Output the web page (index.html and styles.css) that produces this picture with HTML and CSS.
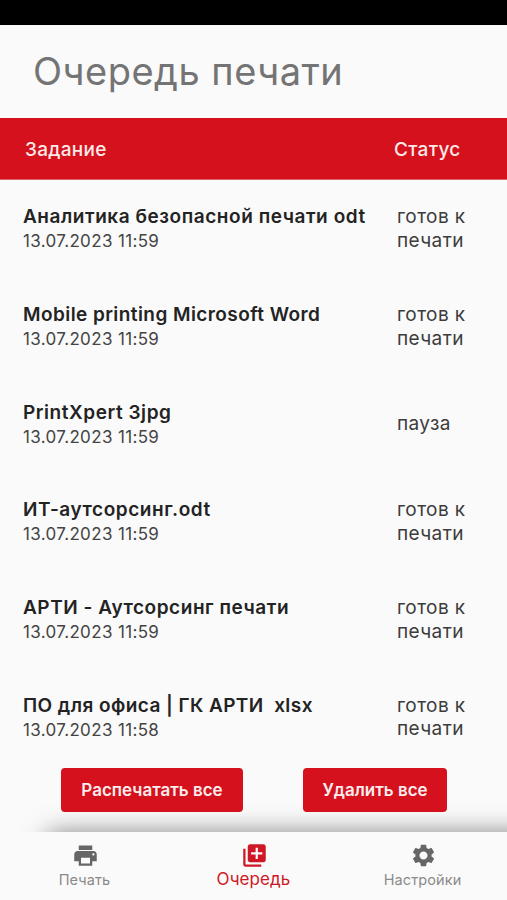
FILE: index.html
```
<!DOCTYPE html>
<html lang="ru">
<head>
    <meta charset="UTF-8">
    <meta name="viewport" content="width=device-width, initial-scale=1.0">
    <title>Очередь печати</title>
    <link rel="stylesheet" href="styles.css">
</head>
<body>
    <div class="status-bar"></div>
    <header class="page-header">
        <h1>Очередь печати</h1>
    </header>
    <div class="table-head">
        <span class="col-job">Задание</span>
        <span class="col-status">Статус</span>
    </div>

    <main class="queue">
        <div class="job">
            <div class="job-info">
                <div class="job-name">Аналитика безопасной печати odt</div>
                <div class="job-date">13.07.2023 11:59</div>
            </div>
            <div class="job-status">готов к печати</div>
        </div>
        <div class="job">
            <div class="job-info">
                <div class="job-name tight">Mobile printing Microsoft Word</div>
                <div class="job-date">13.07.2023 11:59</div>
            </div>
            <div class="job-status">готов к печати</div>
        </div>
        <div class="job">
            <div class="job-info">
                <div class="job-name">PrintXpert 3jpg</div>
                <div class="job-date">13.07.2023 11:59</div>
            </div>
            <div class="job-status">пауза</div>
        </div>
        <div class="job">
            <div class="job-info">
                <div class="job-name">ИТ-аутсорсинг.odt</div>
                <div class="job-date">13.07.2023 11:59</div>
            </div>
            <div class="job-status">готов к печати</div>
        </div>
        <div class="job">
            <div class="job-info">
                <div class="job-name">АРТИ - Аутсорсинг печати</div>
                <div class="job-date">13.07.2023 11:59</div>
            </div>
            <div class="job-status">готов к печати</div>
        </div>
        <div class="job">
            <div class="job-info">
                <div class="job-name tight">ПО для офиса | ГК АРТИ&nbsp; xlsx</div>
                <div class="job-date">13.07.2023 11:58</div>
            </div>
            <div class="job-status">готов к печати</div>
        </div>
    </main>

    <div class="actions">
        <button class="btn btn-print">Распечатать все</button>
        <button class="btn btn-delete">Удалить все</button>
    </div>

    <nav class="tab-bar">
        <a class="tab">
            <svg class="icon" viewBox="0 0 24 24"><path d="M19 8H5c-1.66 0-3 1.34-3 3v6h4v4h12v-4h4v-6c0-1.66-1.34-3-3-3zm-3 11H8v-5h8v5zm3-7c-.55 0-1-.45-1-1s.45-1 1-1 1 .45 1 1-.45 1-1 1zm-1-9H6v4h12V3z"/></svg>
            <span>Печать</span>
        </a>
        <a class="tab active">
            <svg class="icon" viewBox="0 0 24 24"><path d="M4 6H2v14c0 1.1.9 2 2 2h14v-2H4V6zm16-4H8c-1.1 0-2 .9-2 2v12c0 1.1.9 2 2 2h12c1.1 0 2-.9 2-2V4c0-1.1-.9-2-2-2zm-1 9h-4v4h-2v-4H9V9h4V5h2v4h4v2z"/></svg>
            <span>Очередь</span>
        </a>
        <a class="tab">
            <svg class="icon" viewBox="0 0 24 24"><path d="M19.14 12.94c.04-.3.06-.61.06-.94 0-.32-.02-.64-.07-.94l2.03-1.58c.18-.14.23-.41.12-.61l-1.92-3.32c-.12-.22-.37-.29-.59-.22l-2.39.96c-.5-.38-1.03-.7-1.62-.94l-.36-2.54c-.04-.24-.24-.41-.48-.41h-3.84c-.24 0-.43.17-.47.41l-.36 2.54c-.59.24-1.13.57-1.62.94l-2.39-.96c-.22-.08-.47 0-.59.22L2.74 8.87c-.12.21-.08.47.12.61l2.03 1.58c-.05.3-.09.63-.09.94s.02.64.07.94l-2.03 1.58c-.18.14-.23.41-.12.61l1.92 3.32c.12.22.37.29.59.22l2.39-.96c.5.38 1.03.7 1.62.94l.36 2.54c.05.24.24.41.48.41h3.84c.24 0 .44-.17.47-.41l.36-2.54c.59-.24 1.13-.56 1.62-.94l2.39.96c.22.08.47 0 .59-.22l1.92-3.32c.12-.22.07-.47-.12-.61l-2.01-1.58zM12 15.6c-1.98 0-3.6-1.62-3.6-3.6s1.62-3.6 3.6-3.6 3.6 1.62 3.6 3.6-1.62 3.6-3.6 3.6z"/></svg>
            <span>Настройки</span>
        </a>
    </nav>
</body>
</html>
```
FILE: styles.css
```
* {
    box-sizing: border-box;
}

body {
    margin: 0;
    height: 900px;
    display: flex;
    flex-direction: column;
    overflow: hidden;
    background: #fafafa;
    color: #232323;
    font-family: Inter, "Liberation Sans", sans-serif;
}

.status-bar {
    height: 25px;
    background: #000;
}

.page-header {
    height: 93px;
    padding-left: 33px;
}

.page-header h1 {
    margin: 0;
    font-size: 38px;
    font-weight: 400;
    line-height: 93px;
    letter-spacing: 0.5px;
    color: #747474;
}

.table-head {
    display: flex;
    align-items: center;
    height: 62px;
    padding: 1px 0 0 25px;
    background: #d4111c;
    border-bottom: 1px solid #e2646b;
    color: #fde9ea;
    font-size: 19px;
    font-weight: 450;
    letter-spacing: 0.3px;
}

.col-job {
    width: 369px;
}

.queue {
    height: 587px;
}

.job {
    display: flex;
    align-items: center;
    height: 97.7px;
    padding-left: 23px;
}

.job-info {
    width: 374px;
}

.job-name {
    font-size: 19px;
    font-weight: 600;
    line-height: 26px;
    letter-spacing: 0.55px;
    white-space: nowrap;
}

.job-name.tight {
    letter-spacing: 0.43px;
}

.job-date {
    font-size: 17px;
    line-height: 23px;
    letter-spacing: 0.35px;
    color: #444;
}

.job-status {
    width: 90px;
    font-size: 19px;
    line-height: 23.5px;
    letter-spacing: 0.4px;
    color: #3c3c3c;
}

.actions {
    flex: 1;
    display: flex;
    align-items: flex-start;
    gap: 60px;
    padding: 1px 0 0 61px;
}

.btn {
    height: 44px;
    padding: 0;
    border: none;
    border-radius: 4px;
    background: #d4111c;
    color: #fdeced;
    font-family: inherit;
    font-size: 17px;
    font-weight: 600;
    white-space: nowrap;
    position: relative;
    z-index: 1;
}

.btn-print {
    width: 182px;
}

.btn-delete {
    width: 144px;
}

.tab-bar {
    display: grid;
    grid-template-columns: repeat(3, 1fr);
    height: 68px;
    background: #fafafa;
    box-shadow: 48px 3px 27px rgba(0, 0, 0, 0.58);
}

.tab {
    display: flex;
    flex-direction: column;
    align-items: center;
    padding-top: 10px;
    color: #666;
}

.icon {
    width: 27px;
    height: 27px;
    margin-left: 1px;
    fill: currentColor;
}

.tab span {
    font-size: 14.5px;
    line-height: 22px;
    letter-spacing: 0.1px;
    color: #8a8a8a;
}

.tab.active,
.tab.active span {
    color: #cf1826;
}

.tab.active span {
    font-size: 17px;
    line-height: 20px;
}
```
